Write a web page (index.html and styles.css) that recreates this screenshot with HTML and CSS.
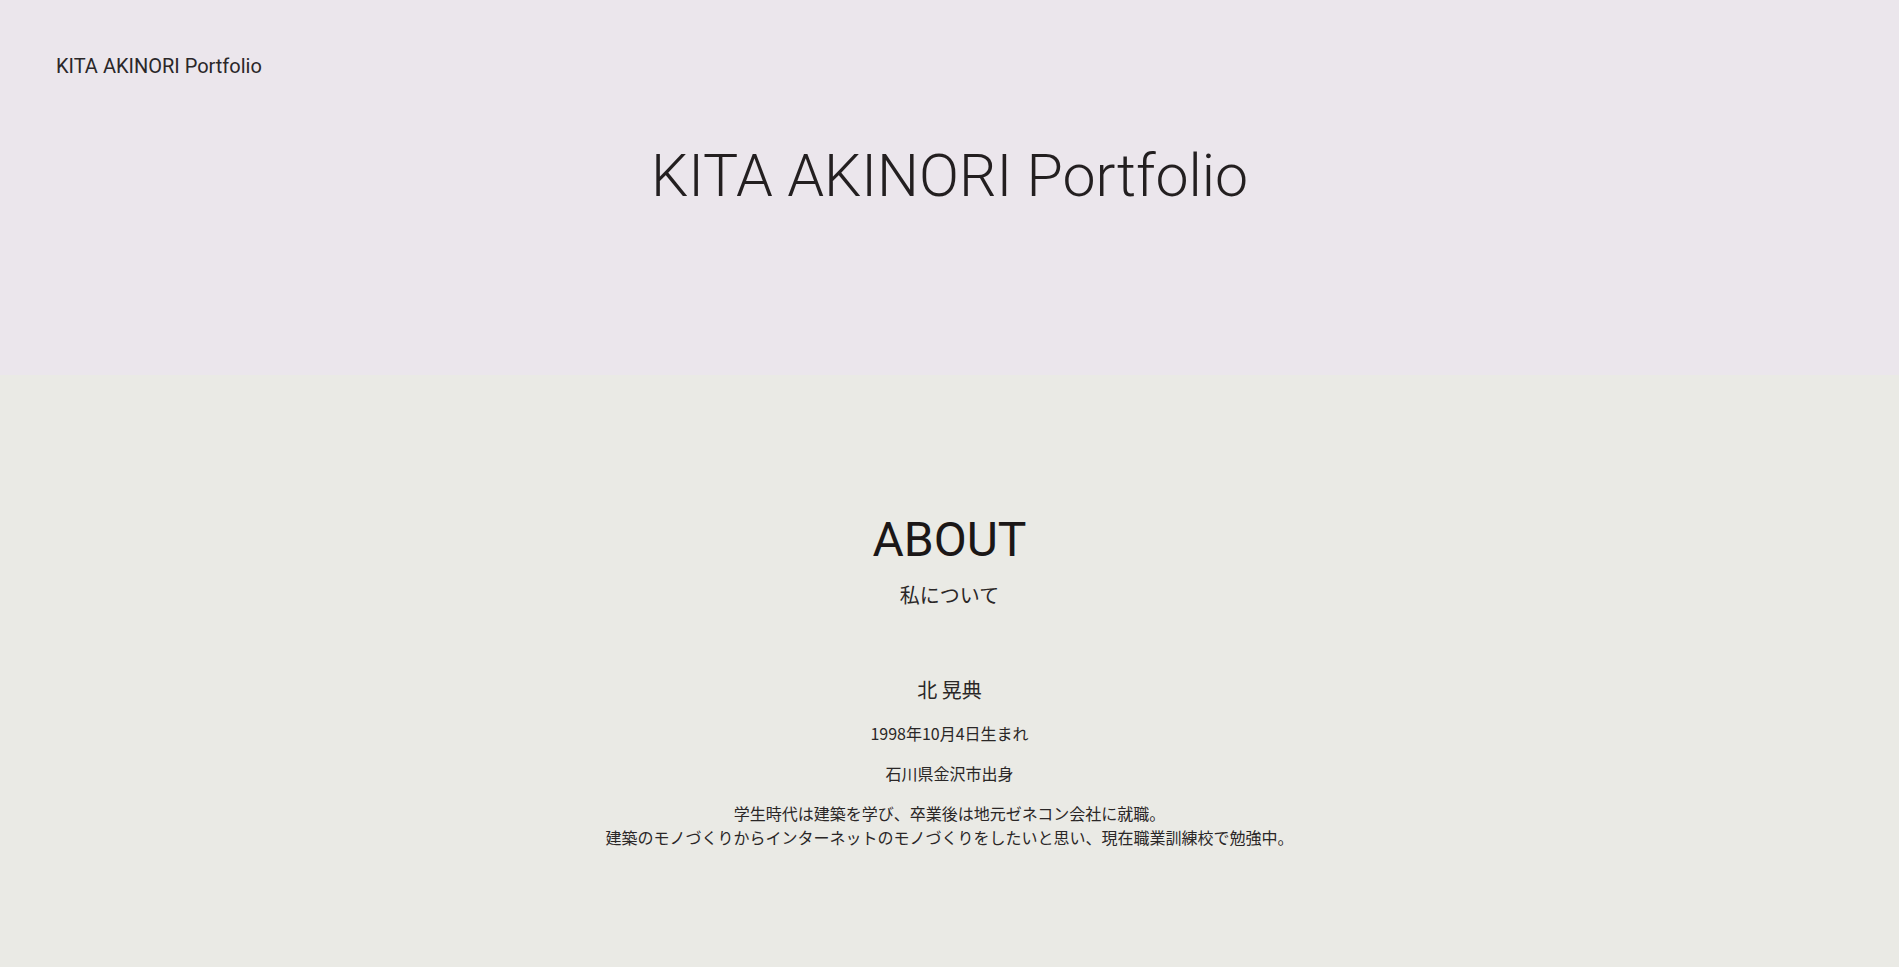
FILE: index.html
```html
<!DOCTYPE html>
<html lang="ja">
<head>
<meta charset="utf-8">
<title>KITA AKINORI Portfolio</title>
<link rel="stylesheet" href="styles.css">
</head>
<body>
<header class="hero">
  <nav class="nav">
    <a class="nav-logo" href="#">KITA AKINORI Portfolio</a>
  </nav>
  <h1 class="hero-title">KITA AKINORI Portfolio</h1>
</header>
<main>
  <section class="about">
    <h2 class="section-title">ABOUT</h2>
    <p class="section-sub">私について</p>
    <div class="about-body">
      <p class="about-name">北 晃典</p>
      <p class="about-text">1998年10月4日生まれ</p>
      <p class="about-text">石川県金沢市出身</p>
      <p class="about-text about-desc">学生時代は建築を学び、卒業後は地元ゼネコン会社に就職。<br>建築のモノづくりからインターネットのモノづくりをしたいと思い、現在職業訓練校で勉強中。</p>
    </div>
  </section>
</main>
</body>
</html>
```

FILE: styles.css
```css
* {
  box-sizing: border-box;
}

html, body {
  margin: 0;
  padding: 0;
}

body {
  font-family: Roboto, "Noto Sans CJK JP", sans-serif;
  color: #222;
  background: #eaeae5;
}

.hero {
  height: 375px;
  background: #ebe6ec;
  padding-top: 54px;
}

.nav {
  padding-left: 56px;
}

.nav-logo {
  font-family: Roboto, sans-serif;
  font-size: 20px;
  line-height: 24px;
  color: #2a2729;
  text-decoration: none;
}

.hero-title {
  margin: 62px 0 0;
  text-align: center;
  font-family: Roboto, sans-serif;
  font-weight: 300;
  font-size: 59px;
  line-height: 72px;
  color: #231f20;
}

.about {
  padding: 136px 0 120px;
  text-align: center;
}

.section-title {
  margin: 0;
  font-family: Roboto, sans-serif;
  font-weight: 400;
  font-size: 48px;
  line-height: 58px;
  color: #1b1717;
}

.section-sub {
  margin: 11px 0 0;
  font-family: "Noto Sans CJK JP", sans-serif;
  font-weight: 400;
  font-size: 20px;
  line-height: 30px;
  color: #2a2727;
}

.about-body {
  margin-top: 65px;
  display: flex;
  flex-direction: column;
  align-items: center;
  gap: 16px;
}

.about-body p {
  margin: 0;
}

.about-name {
  font-family: "Noto Sans CJK JP", sans-serif;
  font-weight: 400;
  font-size: 20px;
  line-height: 30px;
  color: #2a2727;
}

.about-text {
  font-family: "Noto Sans CJK JP", sans-serif;
  font-weight: 400;
  font-size: 16px;
  line-height: 24px;
  color: #2a2727;
}
```
